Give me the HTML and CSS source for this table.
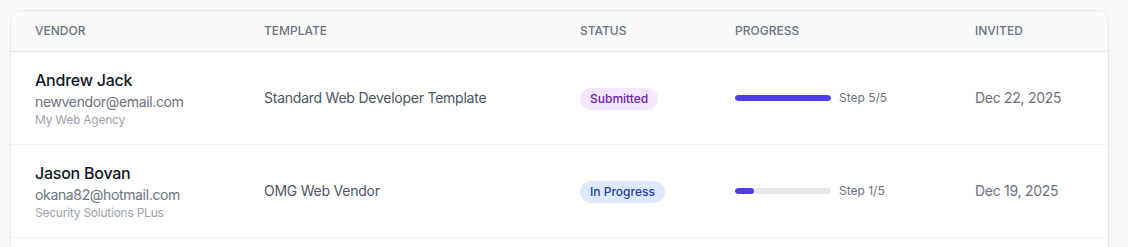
FILE: index.html
```html
<!DOCTYPE html>
<html lang="en">
<head>
<meta charset="utf-8">
<title>Vendors</title>
<link rel="stylesheet" href="styles.css">
</head>
<body>
<div class="card">
  <div class="row head">
    <div class="cell">Vendor</div>
    <div class="cell">Template</div>
    <div class="cell">Status</div>
    <div class="cell">Progress</div>
    <div class="cell">Invited</div>
  </div>
  <div class="row">
    <div class="cell vendor">
      <div class="name">Andrew Jack</div>
      <div class="email">newvendor@email.com</div>
      <div class="company">My Web Agency</div>
    </div>
    <div class="cell template">Standard Web Developer Template</div>
    <div class="cell"><span class="badge submitted">Submitted</span></div>
    <div class="cell progress">
      <div class="track"><div class="fill" style="width:100%"></div></div>
      <span class="step">Step 5/5</span>
    </div>
    <div class="cell date">Dec 22, 2025</div>
  </div>
  <div class="row">
    <div class="cell vendor">
      <div class="name">Jason Bovan</div>
      <div class="email">okana82@hotmail.com</div>
      <div class="company">Security Solutions PLus</div>
    </div>
    <div class="cell template">OMG Web Vendor</div>
    <div class="cell"><span class="badge inprogress">In Progress</span></div>
    <div class="cell progress">
      <div class="track"><div class="fill" style="width:20%"></div></div>
      <span class="step">Step 1/5</span>
    </div>
    <div class="cell date">Dec 19, 2025</div>
  </div>
  <div class="row">
    <div class="cell vendor">
      <div class="name">&nbsp;</div>
    </div>
  </div>
</div>
</body>
</html>
```
FILE: styles.css
```css
* { box-sizing: border-box; }
html, body { margin: 0; padding: 0; }
body {
  background: #f8f9fb;
  font-family: Inter, "Liberation Sans", sans-serif;
  padding: 10px 20px 0 10px;
  height: 247px;
  overflow: hidden;
  letter-spacing: -0.015em;
}
.card {
  background: #fff;
  border: 1px solid #e5e7eb;
  border-radius: 12px;
  overflow: hidden;
  width: 1099px;
}
.row {
  display: grid;
  grid-template-columns: 229px 316px 155px 240px 1fr;
  align-items: center;
  border-bottom: 1px solid #f3f4f6;
}
.row .cell { padding: 16px 24px; }
.row.head {
  background: #f9fafb;
  border-bottom: 1px solid #e5e7eb;
}
.row.head .cell {
  padding: 12px 24px;
  font-size: 12px;
  line-height: 16px;
  font-weight: 500;
  letter-spacing: 0;
  text-transform: uppercase;
  color: #6b7280;
}
.name { font-size: 16px; line-height: 24px; font-weight: 500; color: #111827; }
.email { font-size: 14px; line-height: 20px; color: #6b7280; letter-spacing: -0.025em; }
.company { font-size: 12px; line-height: 16px; color: #9ca3af; }
.template { font-size: 14px; line-height: 20px; color: #4b5563; }
.date { font-size: 14px; line-height: 20px; color: #6b7280; letter-spacing: -0.02em; }
.badge {
  display: inline-block;
  font-size: 12px;
  line-height: 16px;
  font-weight: 500;
  padding: 3px 10px;
  border-radius: 9999px;
  letter-spacing: 0;
}
.submitted { background: #f3e8ff; color: #6b21a8; }
.inprogress { background: #dbeafe; color: #1e40af; }
.progress { display: flex; align-items: center; gap: 8px; }
.track {
  width: 96px;
  height: 6px;
  background: #e5e7eb;
  border-radius: 9999px;
  overflow: hidden;
}
.fill { height: 100%; background: #4f3ee6; border-radius: 9999px; }
.step { font-size: 12px; line-height: 16px; color: #6b7280; letter-spacing: 0; }
```
